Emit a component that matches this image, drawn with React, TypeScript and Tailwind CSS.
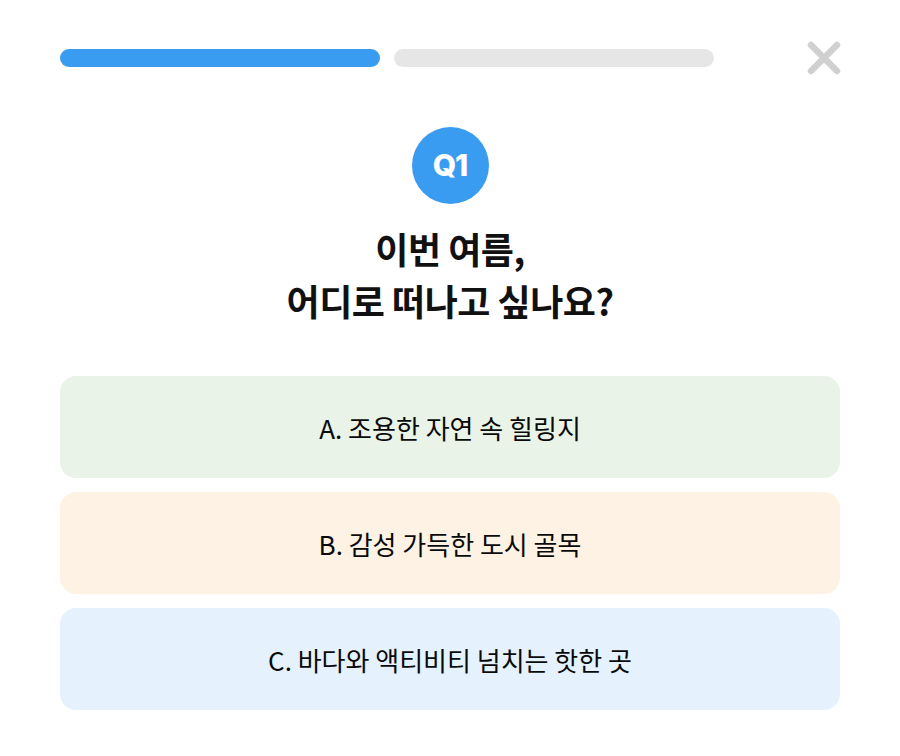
import React from 'react'

const options = [
  { label: 'A. 조용한 자연 속 힐링지', bg: 'bg-[#e9f3e7]' },
  { label: 'B. 감성 가득한 도시 골목', bg: 'bg-[#fef2e4]' },
  { label: 'C. 바다와 액티비티 넘치는 핫한 곳', bg: 'bg-[#e5f2fd]' }
]

const App = () => {
  return (
    <div
      className="w-[900px] h-[756px] bg-white px-[60px] pt-[40px]"
      style={{ fontFamily: '"Noto Sans CJK KR", "Noto Sans", sans-serif' }}
    >
      <div className="flex items-center">
        <div className="w-[320px] h-[18px] rounded-full bg-[#3a9cf0]" />
        <div className="ml-[14px] w-[320px] h-[18px] rounded-full bg-[#e6e6e6]" />
        <button className="ml-auto mr-[-2px] w-[36px] h-[36px] flex items-center justify-center">
          <svg width="36" height="36" viewBox="0 0 36 36">
            <path
              d="M5 5 L31 31 M31 5 L5 31"
              stroke="#d0d0d0"
              strokeWidth="6.5"
              strokeLinecap="round"
            />
          </svg>
        </button>
      </div>

      <div className="flex flex-col items-center mt-[51px]">
        <div className="w-[77px] h-[77px] rounded-full bg-[#3a9cf0] flex items-center justify-center">
          <span
            className="text-white text-[30px] font-extrabold tracking-[-1px]"
            style={{ fontFamily: 'Inter, "Noto Sans", sans-serif' }}
          >
            Q1
          </span>
        </div>
        <h1 className="mt-[18px] text-center text-[36px] leading-[52px] font-semibold text-[#111] tracking-[-0.5px]">
          이번 여름,
          <br />
          어디로 떠나고 싶나요?
        </h1>
      </div>

      <div className="mt-[50px] flex flex-col gap-[14px]">
        {options.map((o) => (
          <button
            key={o.label}
            className={`w-full h-[102px] rounded-[16px] ${o.bg} flex items-center justify-center text-[26px] text-[#0a0a0a] font-normal`}
          >
            {o.label}
          </button>
        ))}
      </div>
    </div>
  )
}

export default App
